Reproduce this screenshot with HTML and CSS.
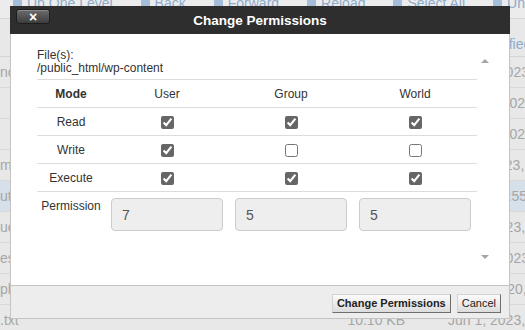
FILE: index.html
```html
<!DOCTYPE html>
<html>
<head>
    <meta charset="UTF-8">
    <meta name="viewport" content="width=device-width, initial-scale=1">
    <title>File Manager - Change Permissions</title>
    <link rel="stylesheet" href="styles.css">
</head>
<body>
    <!-- file manager behind the dialog -->
    <div class="fm">
        <div class="toolbar">
            <span class="tool"><span class="ico"></span>Up One Level</span>
            <span class="tool"><span class="ico"></span>Back</span>
            <span class="tool"><span class="ico"></span>Forward</span>
            <span class="tool"><span class="ico"></span>Reload</span>
            <span class="tool"><span class="ico"></span>Select All</span>
            <span class="tool"><span class="ico"></span>Unselect All</span>
        </div>

        <table class="files">
            <colgroup>
                <col class="col-name">
                <col class="col-size">
                <col class="col-date">
            </colgroup>
            <thead>
                <tr><th class="name">Name</th><th class="size">Size</th><th class="date">Last Modified</th></tr>
            </thead>
            <tbody>
                <tr><td class="name">nc</td><td class="size">4 KB</td><td class="date">Jun 21, 2023, 2:14 PM</td></tr>
                <tr><td class="name"></td><td class="size">4 KB</td><td class="date">May 22, 2023, 9:02 AM</td></tr>
                <tr><td class="name"></td><td class="size">4 KB</td><td class="date">May 25, 2023, 4:40 PM</td></tr>
                <tr><td class="name">mi</td><td class="size">4 KB</td><td class="date">Apr 3, 2023, 11:20 AM</td></tr>
                <tr class="sel"><td class="name">ute</td><td class="size">4 KB</td><td class="date">Today, 10:55 AM</td></tr>
                <tr><td class="name">ue</td><td class="size">2.1 KB</td><td class="date">Jun 6, 2023, 3:08 PM</td></tr>
                <tr><td class="name">es</td><td class="size">405 bytes</td><td class="date">Jun 28, 2023, 8:51 AM</td></tr>
                <tr><td class="name">ph</td><td class="size">7.62 KB</td><td class="date">Mar 6, 2020, 1:33 PM</td></tr>
                <tr><td class="name">.txt</td><td class="size">10.10 KB</td><td class="date">Jun 1, 2023, 5:47 PM</td></tr>
            </tbody>
        </table>
    </div>

    <!-- dialog -->
    <div class="dialog">
        <div class="dlg-head">
            <button class="dlg-close">&times;</button>
            <div class="dlg-title">Change Permissions</div>
        </div>

        <div class="dlg-body">
            <div class="perm-content">
                <div class="file-label">File(s):</div>
                <div class="file-label">/public_html/wp-content</div>

                <table class="perm-table">
                    <colgroup>
                        <col class="col-mode">
                        <col><col><col>
                    </colgroup>
                    <tr class="perm-head">
                        <td class="mode">Mode</td><td>User</td><td>Group</td><td>World</td>
                    </tr>
                    <tr>
                        <td>Read</td>
                        <td><input type="checkbox" checked></td>
                        <td><input type="checkbox" checked></td>
                        <td><input type="checkbox" checked></td>
                    </tr>
                    <tr>
                        <td>Write</td>
                        <td><input type="checkbox" checked></td>
                        <td><input type="checkbox"></td>
                        <td><input type="checkbox"></td>
                    </tr>
                    <tr>
                        <td>Execute</td>
                        <td><input type="checkbox" checked></td>
                        <td><input type="checkbox" checked></td>
                        <td><input type="checkbox" checked></td>
                    </tr>
                    <tr class="perm-row">
                        <td class="perm-label">Permission</td>
                        <td><input class="perm-input" type="text" value="7" readonly></td>
                        <td><input class="perm-input" type="text" value="5" readonly></td>
                        <td><input class="perm-input" type="text" value="5" readonly></td>
                    </tr>
                </table>
            </div>

            <div class="scrollbar">
                <span class="arrow-up"></span>
                <span class="arrow-down"></span>
            </div>
        </div>

        <div class="dlg-foot">
            <button class="btn btn-primary">Change Permissions</button>
            <button class="btn">Cancel</button>
        </div>
    </div>
</body>
</html>
```

FILE: styles.css
```css
*{
    box-sizing: border-box;
}

body{
    margin: 0;
    width: 525px;
    height: 330px;
    overflow: hidden;
    position: relative;
    background-color: #e8e8e8;
    font-family: "Liberation Sans", Arial, sans-serif;
}

/* ---------- file manager (behind) ---------- */

.toolbar{
    display: flex;
    gap: 28px;
    height: 19px;
    padding-left: 13px;
    overflow: hidden;
    background-color: #ececec;
    border-bottom: 1px solid #d6d6d6;
}

.tool{
    display: flex;
    align-items: center;
    gap: 5px;
    margin-top: -12px;
    line-height: 16px;
    font-size: 14px;
    color: #8eabcb;
    white-space: nowrap;
}

.ico{
    width: 9px;
    height: 12px;
    border-radius: 2px;
    background-color: #a4bdd8;
}

.files{
    width: 720px;
    table-layout: fixed;
    border-collapse: collapse;
    font-size: 14px;
    color: #a6a6a6;
}

.col-name{
    width: 300px;
}

.col-size{
    width: 105px;
}

.col-date{
    width: 315px;
}

.files th{
    height: 37px;
    padding: 0 0 4px;
    vertical-align: bottom;
    text-align: left;
    font-weight: normal;
    color: #8eabcb;
    border-bottom: 1px solid #d4d4d4;
}

.files td{
    height: 31px;
    padding: 0;
    white-space: nowrap;
    overflow: hidden;
    border-bottom: 1px solid #d9d9d9;
}

.files th.name{
    padding-left: 40px;
}

.files .size{
    text-align: right;
}

.files .date{
    padding-left: 43px;
}

.files .sel td{
    background-color: #d6e0ea;
}

/* ---------- dialog ---------- */

.dialog{
    position: absolute;
    left: 10px;
    top: 6px;
    width: 500px;
}

.dlg-head{
    display: grid;
    grid-template-columns: 1fr auto 1fr;
    height: 28px;
    background-color: #2e2e2e;
}

.dlg-close{
    justify-self: start;
    align-self: start;
    width: 34px;
    height: 15px;
    margin: 3px 0 0 6px;
    padding: 0;
    border: 1px solid #1d1d1d;
    border-radius: 3px;
    background: linear-gradient(#6b6b6b, #3d3d3d);
    box-shadow: inset 0 1px 0 #8a8a8a;
    color: #fff;
    font: bold 14px/12px "Liberation Sans", Arial, sans-serif;
}

.dlg-title{
    align-self: center;
    color: #fff;
    font-size: 13.5px;
    font-weight: bold;
}

.dlg-body{
    display: flex;
    height: 251px;
    padding: 15px 17px 18px;
    background-color: #fff;
    border-left: 1px solid #c4c4c4;
    border-right: 1px solid #c4c4c4;
}

.perm-content{
    flex: 1;
    padding-left: 9px;
}

.file-label{
    font-size: 12px;
    line-height: 13px;
    color: #333;
}

.perm-table{
    width: 440px;
    margin-top: 4px;
    table-layout: fixed;
    border-collapse: separate;
    border-spacing: 0;
    font-size: 12px;
    color: #333;
}

.col-mode{
    width: 68px;
}

.perm-table td{
    height: 28px;
    padding: 0;
    text-align: center;
    vertical-align: middle;
    border-top: 1px solid #dcdcdc;
}

.perm-table .mode{
    font-weight: bold;
}

.perm-table input[type=checkbox]{
    width: 13px;
    height: 13px;
    margin: 0;
    vertical-align: middle;
    accent-color: #666;
}

.perm-row td{
    height: 42px;
    padding-top: 6px;
    vertical-align: top;
}

.perm-row .perm-label{
    padding-top: 7px;
}

.perm-input{
    width: 112px;
    height: 33px;
    padding: 0 10px;
    border: 1px solid #ccc;
    border-radius: 4px;
    background-color: #eee;
    color: #555;
    font: 14px "Liberation Sans", Arial, sans-serif;
}

.scrollbar{
    width: 15px;
    display: flex;
    flex-direction: column;
    justify-content: space-between;
    align-items: center;
    padding: 10px 0 8px;
}

.arrow-up, .arrow-down{
    width: 0;
    height: 0;
    border-left: 4px solid transparent;
    border-right: 4px solid transparent;
}

.arrow-up{
    border-bottom: 4px solid #a6a6a6;
}

.arrow-down{
    border-top: 4px solid #a6a6a6;
}

.dlg-foot{
    display: flex;
    justify-content: flex-end;
    align-items: center;
    gap: 6px;
    height: 34px;
    padding: 2px 8px 0 0;
    background-color: #ededed;
    border: 1px solid #c4c4c4;
}

.btn{
    height: 19px;
    padding: 0 4px;
    border: 1px solid;
    border-color: #d2d2d2 #6e6e6e #6e6e6e #d2d2d2;
    border-radius: 0;
    background: linear-gradient(#fbfbfb, #dcdcdc);
    color: #222;
    font: 11px "Liberation Sans", Arial, sans-serif;
}

.btn-primary{
    font-weight: bold;
}
```
